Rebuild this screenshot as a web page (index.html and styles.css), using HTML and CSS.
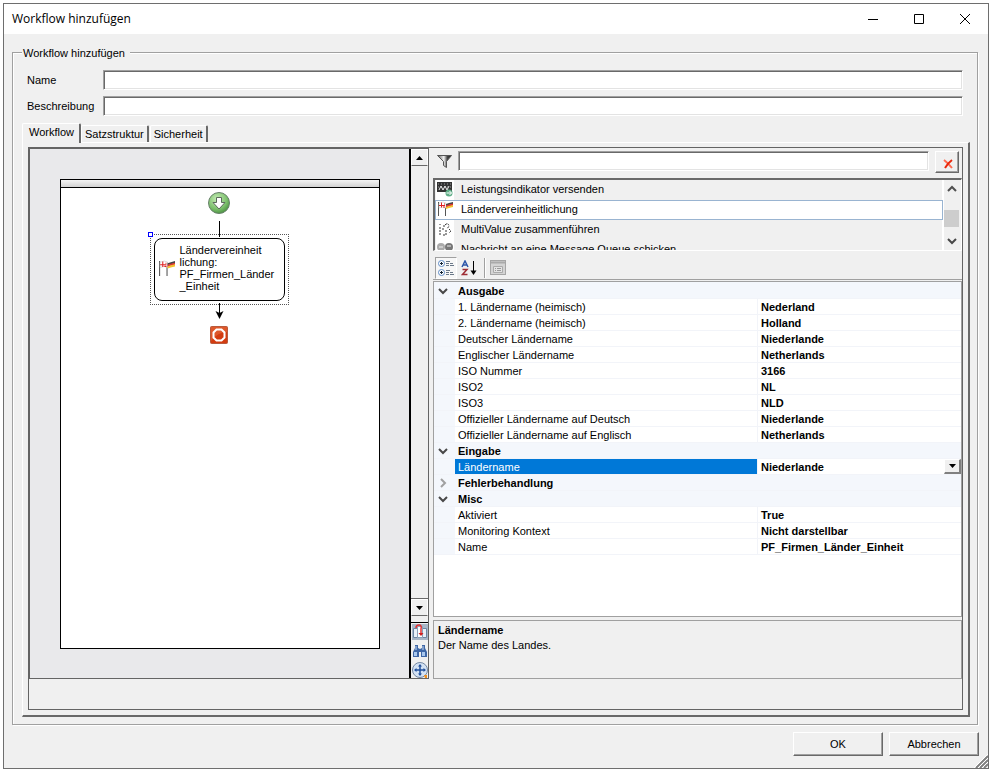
FILE: index.html
```html
<!DOCTYPE html>
<html lang="de">
	<head>
		<title>Workflow hinzufügen</title>
		<meta charset="utf-8">
		<meta name="viewport" content="width=device-width, initial-scale=1.0">
		<link rel="stylesheet" href="styles.css">
	</head>

	<body>
	<!-- shared icons -->
	<svg class="defs" width="0" height="0">
		<symbol id="flags" viewBox="0 0 16 16">
			<path d="M1.5 1v14M8.5 2v13" stroke="#555" fill="none"/>
			<path d="M2 2l4-1 3 1v5l-3-1-4 1z" fill="#fff" stroke="#bbb" stroke-width=".5"/>
			<path d="M4.5 1.500v5M2 4.500h6M7 3h1M6 6h2" stroke="#e02020" fill="none"/>
			<path d="M9 3l3-1 4-1v2l-4 1-3 1z" fill="#444"/>
			<path d="M9 4.500l3-1 4-1v2l-4 1-3 1z" fill="#d33"/>
			<path d="M9 6l3-1 4-1v2l-4 1-3 1z" fill="#f2c230"/>
		</symbol>
		<symbol id="down" viewBox="0 0 10 10"><path d="M1 3l4 4 4-4" fill="none" stroke="#484848" stroke-width="2"/></symbol>
	</svg>

	<div class="window">
		<div class="titlebar">
			<span class="title">Workflow hinzufügen</span>
			<button class="winbtn" aria-label="Minimieren"><svg width="12" height="12"><path d="M1 6.500h10" stroke="#000"/></svg></button>
			<button class="winbtn" aria-label="Maximieren"><svg width="12" height="12"><path d="M1.500 1.500h9v9h-9z" fill="none" stroke="#000"/></svg></button>
			<button class="winbtn" aria-label="Schließen"><svg width="12" height="12"><path d="M1 1l10 10M11 1L1 11" stroke="#000"/></svg></button>
		</div>

		<fieldset>
			<legend>Workflow hinzufügen</legend>
			<div class="field"><label for="name">Name</label><input type="text" id="name"></div>
			<div class="field"><label for="desc">Beschreibung</label><input type="text" id="desc"></div>

			<div class="tabs" role="tablist">
				<button class="tab active" role="tab" aria-selected="true">Workflow</button>
				<button class="tab" role="tab">Satzstruktur</button>
				<button class="tab" role="tab">Sicherheit</button>
			</div>

			<div class="tabpage">
				<div class="panel">
					<div class="split">

						<!-- designer -->
						<div class="designer">
							<div class="canvas">
								<div class="sheet">
									<div class="strip"></div>
									<div class="flow">
										<svg width="22" height="22">
											<defs><radialGradient id="green" cx=".4" cy=".3" r=".8"><stop offset="0" stop-color="#c4ebb4"/><stop offset=".6" stop-color="#7cc06c"/><stop offset="1" stop-color="#3c8434"/></radialGradient></defs>
											<circle cx="11" cy="11" r="10.500" fill="url(#green)" stroke="#67806a"/>
											<path d="M8.500 5.500h5v5h3.500l-6 6.500-6-6.500h3.500z" fill="#fff" stroke="#5c6b5c"/>
										</svg>
										<svg class="line" width="8" height="16"><path d="M4.500 0v16" stroke="#000"/></svg>
										<div class="selection">
											<div class="handle"></div>
											<div class="node">
												<svg width="17" height="17"><use href="#flags"/></svg>
												<span>Ländervereinheit<br>lichung:<br>PF_Firmen_Länder<br>_Einheit</span>
											</div>
										</div>
										<svg class="arrow" width="10" height="17"><path d="M5.500 0v10" stroke="#000"/><path d="M1.500 8l4 2 4-2-4 8z"/></svg>
										<svg class="stop" width="18" height="18">
											<rect x=".5" y=".5" width="17" height="17" rx="1" fill="#d33c10" stroke="#b85a3c"/>
											<path d="M1 1h16v5q-9 0-16 9z" fill="#e46a3e" opacity=".6"/>
											<path d="M6.500 3.500h5l3 3v5l-3 3h-5l-3-3v-5z" fill="none" stroke="#fff" stroke-width="2"/>
										</svg>
									</div>
								</div>
							</div>
							<div class="sidebar">
								<button class="step" aria-label="Nach oben"><svg width="7" height="4"><path d="M0 4h7L3.500 0z"/></svg></button>
								<div class="track"></div>
								<button class="step" aria-label="Nach unten"><svg width="7" height="4"><path d="M0 0h7L3.500 4z"/></svg></button>
								<div class="tools">
									<button aria-label="Seiten"><svg width="16" height="16">
										<rect width="16" height="16" fill="#a9b7c7"/>
										<path d="M1.500 4.500h4v9h-4zM10.500 4.500h4v9h-4z" fill="#e8f0f8" stroke="#6d86a3"/>
										<path d="M5.500 2.500h5v11h-5z" fill="#fff" stroke="#8aa0b8"/>
										<path d="M4 4q0-3 3-3t2 4v6" stroke="#e03030" stroke-width="1.500" fill="none"/><path d="M6.500 9h5l-2.500 3z" fill="#d02020"/>
									</svg></button>
									<button aria-label="Suchen"><svg width="16" height="16">
										<path d="M3 2h3v3l2 1 2-1v-3h3v3l2 4v5h-6v-5h-2v5h-6v-5l2-4z" fill="#3f67a6"/>
										<path d="M2 9h3v4h-3zM10 9h3v4h-3z" fill="#a9c8ee"/><path d="M4 3v4M11 3v4" stroke="#c6daf2"/>
									</svg></button>
									<button aria-label="Verschieben"><svg width="16" height="16">
										<circle cx="8" cy="8" r="7.500" fill="#d3e2f4" stroke="#7388a4"/>
										<path d="M8 3v10M3 8h10" stroke="#22509c" stroke-width="1.500"/>
										<path d="M8 2l2 2.500h-4zM8 14l2-2.500h-4zM2 8l2.500-2v4zM14 8l-2.500-2v4z" fill="#22509c"/>
										<path d="M12 13h3v3h-2z" fill="#f09020"/>
									</svg></button>
								</div>
							</div>
						</div>

						<!-- activities and properties -->
						<div class="side">
							<div class="filter">
								<svg width="15" height="13">
									<defs><linearGradient id="metal"><stop offset="0" stop-color="#555"/><stop offset=".45" stop-color="#f4f4f4"/><stop offset=".7" stop-color="#444"/><stop offset="1" stop-color="#222"/></linearGradient></defs>
									<path d="M.5.5h14l-5 6v6l-3-2v-4z" fill="url(#metal)" stroke="#555"/>
								</svg>
								<input type="text" aria-label="Filter">
								<button class="clear" aria-label="Filter löschen"><svg width="10" height="10"><path d="M1 1q4 3 8 8" stroke="#ff6a50" stroke-width="2" fill="none"/><path d="M9 1q-4 3-7 8" stroke="#e8280c" stroke-width="2" fill="none"/></svg></button>
							</div>

							<div class="listbox">
								<ul>
									<li><svg width="16" height="16"><rect y="1" width="15" height="10" fill="#333"/><path d="M1 3h13M1 6h13" stroke="#999" stroke-dasharray="1 2"/><path d="M2 9l2-4 2 4 2-4 2 4 2-4" stroke="#eee" fill="none"/><circle cx="12" cy="12" r="3.500" fill="#5fae87"/><path d="M9.500 12h5M12.500 10l2 2-2 2" stroke="#fff" fill="none"/></svg>Leistungsindikator versenden</li>
									<li class="current"><svg width="16" height="16"><use href="#flags"/></svg>Ländervereinheitlichung</li>
									<li><svg width="16" height="16"><path d="M3 3v1M3 6v8M6 5h2M6 14h2M8 4q3-3 4 1l-2 3M9 9v5M12 8l2 2-2 2M5 8h2" stroke="#333" stroke-dasharray="2 1" fill="none"/></svg>MultiValue zusammenführen</li>
									<li><svg width="16" height="16"><circle cx="4" cy="6" r="4" fill="#aaa"/><circle cx="12" cy="6" r="4" fill="#777"/><path d="M2 6h4M10 5h4" stroke="#eee"/></svg>Nachricht an eine Message Queue schicken</li>
								</ul>
								<div class="scroll">
									<svg width="10" height="10"><path d="M1 7l4-4 4 4" fill="none" stroke="#505050" stroke-width="2"/></svg>
									<div class="thumb"></div>
									<svg width="10" height="10"><use href="#down"/></svg>
								</div>
							</div>

							<div class="toolbar">
								<button class="pressed" aria-label="Kategorien"><svg width="16" height="16">
									<g fill="#fff" stroke="#5f8bc4"><circle cx="3.500" cy="3.500" r="3"/><circle cx="3.500" cy="12.500" r="3"/></g>
									<path d="M2 3.500h3M3.500 2v3M2 12.500h3M3.500 11v3" stroke="#123"/>
									<path d="M8 1.500h4M8 3.500h3M12 3.500h3M8 5.500h3M12 5.500h4M8 10.500h4M8 12.500h3M12 12.500h3M8 14.500h3M12 14.500h4" stroke="#6a7888"/>
								</svg></button>
								<button aria-label="Alphabetisch"><svg width="16" height="16">
									<path d="M1 7l3-6 3 6M2 5h4" stroke="#2c55a8" stroke-width="1.500" fill="none"/>
									<path d="M1.500 9.500h4.500l-4.500 5h5" stroke="#9e2c34" stroke-width="1.500" fill="none"/>
									<path d="M12.500 1v12" stroke="#000"/><path d="M9.500 10.500h6l-3 4.500z"/>
								</svg></button>
								<i></i>
								<button disabled aria-label="Eigenschaftenseiten"><svg width="16" height="16">
									<rect x=".5" y=".5" width="15" height="14" fill="#d4d4d4" stroke="#a6a6a6"/><path d="M1 2.500h14" stroke="#aaa" stroke-width="2"/>
									<path d="M3.500 6.500h9v6h-9z" fill="#e4e4e4" stroke="#aaa"/><path d="M5 8.500h1M7 8.500h4M5 10.500h1M7 10.500h4" stroke="#999"/>
								</svg></button>
							</div>

							<div class="propgrid">
								<table>
									<colgroup><col class="c-gutter"><col class="c-name"><col></colgroup>
									<tr class="cat"><td><svg width="10" height="10"><use href="#down"/></svg></td><th colspan="2">Ausgabe</th></tr>
									<tr><td></td><td>1. Ländername (heimisch)</td><td>Nederland</td></tr>
									<tr><td></td><td>2. Ländername (heimisch)</td><td>Holland</td></tr>
									<tr><td></td><td>Deutscher Ländername</td><td>Niederlande</td></tr>
									<tr><td></td><td>Englischer Ländername</td><td>Netherlands</td></tr>
									<tr><td></td><td>ISO Nummer</td><td>3166</td></tr>
									<tr><td></td><td>ISO2</td><td>NL</td></tr>
									<tr><td></td><td>ISO3</td><td>NLD</td></tr>
									<tr><td></td><td>Offizieller Ländername auf Deutsch</td><td>Niederlande</td></tr>
									<tr><td></td><td>Offizieller Ländername auf Englisch</td><td>Netherlands</td></tr>
									<tr class="cat"><td><svg width="10" height="10"><use href="#down"/></svg></td><th colspan="2">Eingabe</th></tr>
									<tr class="selected"><td></td><td><label for="land">Ländername</label></td><td><div class="combo"><select id="land"><option>Niederlande</option></select><span class="drop"><svg width="7" height="4"><path d="M0 0h7L3.500 4z"/></svg></span></div></td></tr>
									<tr class="cat"><td><svg width="10" height="10"><path d="M3 1l4 4-4 4" fill="none" stroke="#a0a0a0" stroke-width="2"/></svg></td><th colspan="2">Fehlerbehandlung</th></tr>
									<tr class="cat"><td><svg width="10" height="10"><use href="#down"/></svg></td><th colspan="2">Misc</th></tr>
									<tr><td></td><td>Aktiviert</td><td>True</td></tr>
									<tr><td></td><td>Monitoring Kontext</td><td>Nicht darstellbar</td></tr>
									<tr><td></td><td>Name</td><td>PF_Firmen_Länder_Einheit</td></tr>
								</table>
							</div>

							<div class="help">
								<b>Ländername</b>
								<p>Der Name des Landes.</p>
							</div>
						</div>
					</div>
				</div>
			</div>
		</fieldset>

		<div class="buttons">
			<button class="btn">OK</button>
			<button class="btn">Abbrechen</button>
		</div>
		<svg class="grip" width="14" height="14"><path d="M2 14L14 2M6 14l8-8M10 14l4-4" stroke="#808080" stroke-width="2"/><path d="M0 14L14 0M4 14L14 4M8 14l6-6" stroke="#fff"/></svg>
	</div>
	</body>
</html>
```
FILE: styles.css
```css
* {
	box-sizing: border-box;
}
body {
	margin: 0;
	background: #fff;
	color: #000;
	font: 11px/13px "Liberation Sans", Arial, sans-serif;
}
button, input, select {
	font: inherit;
	color: inherit;
	margin: 0;
	padding: 0;
	border-radius: 0;
}
button {
	background: #f0f0f0;
	border: 0;
}
svg {
	display: block;
	flex: none;
}
.defs {
	position: absolute;
}

/* window */
.window {
	position: relative;
	display: flex;
	flex-direction: column;
	min-height: calc(100vh - 6px);
	margin: 3px;
	border: 1px solid #6e6e6e;
	background: #f0f0f0;
}
.titlebar {
	display: flex;
	align-items: center;
	height: 30px;
	padding-left: 8px;
	background: #fff;
}
.title {
	flex: 1;
	font: 12px/16px "Open Sans", "Noto Sans", sans-serif;
}
.winbtn {
	display: flex;
	align-items: center;
	justify-content: center;
	width: 46px;
	height: 28px;
	background: none;
}

/* group box */
fieldset {
	flex: 1;
	min-width: 0;
	margin: 10px 10px 0 8px;
	padding: 10px 7px 7px 9px;
	border: 1px solid #a0a0a0;
	box-shadow: 1px 1px 0 #fff, inset 1px 1px 0 #fff;
}
legend {
	width: 108px;
	height: 16px;
	padding: 3px 0 0 1px;
	background: #f0f0f0;
	white-space: nowrap;
}
.field {
	display: flex;
	align-items: center;
	margin: 0 7px 6px 5px;
}
.field label {
	width: 76px;
}
input {
	flex: 1;
	min-width: 0;
	height: 20px;
	background: #fff;
	border: 1px solid #fff;
	border-top-color: #a0a0a0;
	border-left-color: #a0a0a0;
	box-shadow: inset 1px 1px 0 #696969, inset -1px -1px 0 #e3e3e3;
	outline: 0;
}

/* tabs */
.tabs {
	display: flex;
	align-items: flex-end;
	padding-top: 1px;
}
.tab {
	height: 17px;
	margin-right: 1px;
	padding: 0 3px;
	border-top: 1px solid #fff;
	border-left: 1px solid #fff;
	border-right: 2px solid #696969;
	border-radius: 2px 2px 0 0;
}
.tab.active {
	position: relative;
	z-index: 1;
	height: 20px;
	margin: 0 0 -1px;
	padding: 0 5px 3px 6px;
}
/* fills what the title bar, fields and footer leave over */
.tabpage {
	display: flex;
	min-height: calc(100vh - 196px);
	padding: 4px 5px 5px;
	border: 1px solid #fff;
	border-right: 2px solid #696969;
	border-bottom: 2px solid #696969;
}
.panel {
	flex: 1;
	display: flex;
	flex-direction: column;
	min-width: 0;
	padding-bottom: 30px;
	border: 1px solid #646464;
}
.split {
	flex: 1;
	display: grid;
	grid-template-columns: 400px minmax(0, 1fr);
	column-gap: 4px;
}

/* designer */
.designer {
	display: flex;
	border: 1px solid #646464;
}
.canvas {
	flex: 1;
	display: flex;
	padding: 30px 29px 29px 30px;
	background: #e9e9eb;
	border-right: 2px solid #000;
}
.sheet {
	flex: 1;
	background: #fff;
	border: 1px solid #000;
}
.strip {
	height: 8px;
	background: linear-gradient(#f4f4f4, #d2d2d2);
	border-bottom: 1px solid #000;
}
.flow {
	display: flex;
	flex-direction: column;
	align-items: center;
	padding: 4px 2px 0 0;
}
.line {
	margin-top: 7px;
}
.selection {
	position: relative;
	z-index: 0;
	width: 139px;
	margin-top: -3px;
	padding: 3px;
	border: 1px dotted #555;
}
.handle {
	position: absolute;
	left: -3px;
	top: -3px;
	width: 5px;
	height: 5px;
	background: #fff;
	border: 1px solid #00f;
}
.node {
	display: flex;
	align-items: center;
	gap: 5px;
	height: 63px;
	padding: 0 3px 3px;
	background: #fff;
	border: 1px solid #000;
	border-radius: 8px;
	line-height: 12px;
	white-space: nowrap;
}
.arrow {
	margin-top: -2px;
}
.stop {
	margin-top: 6px;
}
.sidebar {
	display: flex;
	flex-direction: column;
	width: 17px;
	background: #f0f0f0;
}
.step {
	display: flex;
	align-items: center;
	justify-content: center;
	height: 17px;
	border: 1px solid #fff;
	border-bottom-color: #696969;
}
.track {
	flex: 1;
	border-bottom: 1px solid #696969;
}
.tools {
	display: flex;
	flex-direction: column;
	gap: 3px;
	margin-top: 6px;
	padding: 1px 0 0 1px;
	border-top: 1px solid #000;
}
.tools button {
	display: block;
}

/* right side */
.side {
	display: flex;
	flex-direction: column;
	min-width: 0;
}
.filter {
	display: flex;
	padding: 3px 3px 5px 4px;
}
.filter svg {
	margin-top: 4px;
}
.filter input {
	margin: 0 6px;
}
.clear {
	display: flex;
	justify-content: center;
	width: 24px;
	height: 22px;
	padding: 3px 0 0 2px;
}
.clear, .btn {
	border: 1px solid #fff;
	border-right-color: #696969;
	border-bottom-color: #696969;
	box-shadow: inset -1px -1px 0 #a0a0a0;
}
.listbox {
	display: flex;
	height: 73px;
	border: 1px solid #fff;
	border-top: 2px solid #696969;
	border-left: 2px solid #696969;
	overflow: hidden;
}
ul {
	flex: 1;
	margin: 0;
	padding: 0;
	list-style: none;
}
li {
	display: flex;
	align-items: center;
	gap: 8px;
	height: 20px;
	padding: 0 0 2px 1px;
	border: 1px solid transparent;
	background: linear-gradient(90deg, #fff 18px, transparent 18px);
}
li.current {
	background: #fff;
	border-color: #99b4d1;
}
.scroll {
	display: flex;
	flex-direction: column;
	align-items: center;
	justify-content: space-between;
	width: 18px;
	padding: 4px 2px 4px 0;
	border-left: 1px solid #fff;
}
.thumb {
	width: 15px;
	height: 17px;
	margin-top: 6px;
	background: #cdcdcd;
}
.toolbar {
	display: flex;
	align-items: center;
	height: 29px;
	padding: 6px 0 0 2px;
	border-bottom: 1px solid #a0a0a0;
}
.toolbar button {
	padding: 2px;
	margin-right: 1px;
	border: 1px solid transparent;
}
.toolbar .pressed {
	border-color: #a0a0a0 #fff #fff #a0a0a0;
	background: #f7f7f7;
}
.toolbar i {
	width: 2px;
	height: 20px;
	margin: 0 1px 0 3px;
	border-left: 1px solid #a0a0a0;
	border-right: 1px solid #fff;
}

/* property grid */
.propgrid {
	flex: 1;
	margin-top: 1px;
	background: #fff;
	border: 1px solid #a0a0a0;
}
table {
	width: 100%;
	table-layout: fixed;
	border-spacing: 0;
	border-top: 1px solid #f4f7fc;
}
.c-gutter {
	width: 21px;
}
.c-name {
	width: 303px;
}
tr {
	height: 16px;
}
td, th {
	padding: 2px 0 0 3px;
	border-bottom: 1px solid #f2f4f9;
	text-align: left;
	white-space: nowrap;
}
td:first-child, .cat td, .cat th {
	background: #f4f7fc;
}
td:first-child {
	padding: 0 0 0 4px;
}
td:nth-child(2) {
	border-right: 1px solid #f2f4f9;
}
td:nth-child(3) {
	font-weight: bold;
}
.selected td:nth-child(2) {
	background: #0078d7;
	color: #fff;
}
.selected td:nth-child(3) {
	padding-top: 0;
}
.combo {
	position: relative;
	display: flex;
	height: 15px;
}
select {
	flex: 1;
	appearance: none;
	padding-top: 2px;
	background: #fff;
	border: 0;
	outline: 0;
}
.drop {
	position: absolute;
	right: 0;
	top: 0;
	display: flex;
	align-items: center;
	justify-content: center;
	width: 17px;
	height: 15px;
	background: #f0f0f0;
	border: 1px solid #fff;
	border-right: 2px solid #808080;
	border-bottom: 2px solid #808080;
	pointer-events: none;
}
.help {
	height: 59px;
	margin-top: 3px;
	padding: 2px 4px;
	border: 1px solid #a0a0a0;
	line-height: 15px;
}
.help p {
	margin: 0;
}

/* footer */
.buttons {
	display: flex;
	justify-content: flex-end;
	gap: 6px;
	padding: 7px 9px 12px;
}
.btn {
	width: 90px;
	height: 24px;
}
.grip {
	position: absolute;
	right: 0;
	bottom: 0;
}
```
